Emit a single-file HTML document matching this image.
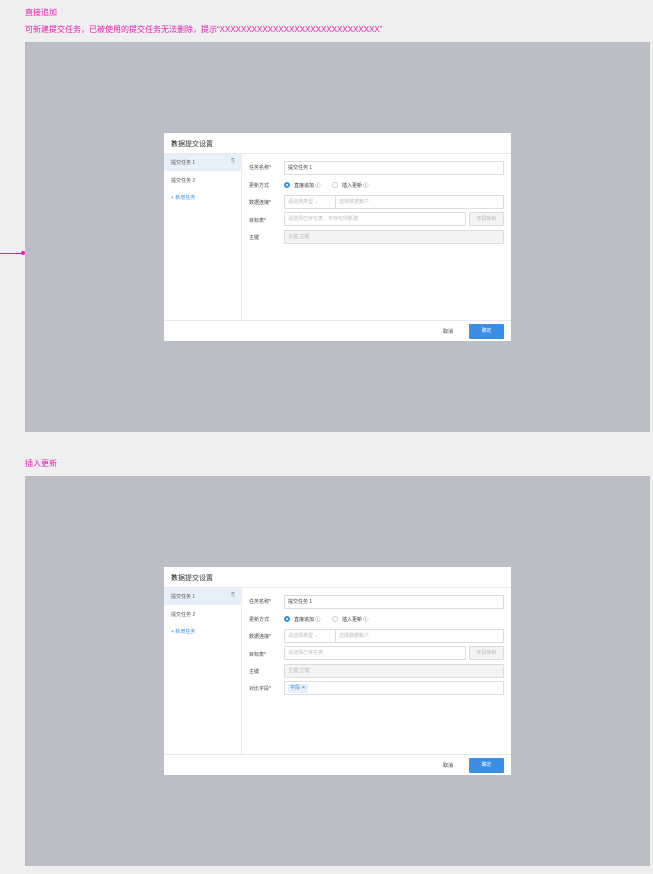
<!DOCTYPE html><html><head><meta charset="utf-8"><style>
*{margin:0;padding:0;box-sizing:border-box}
body{width:653px;height:874px;background:#efefef;position:relative;overflow:hidden;font-family:"Liberation Sans","Noto Sans CJK SC",sans-serif;color:#333}
.a{position:absolute}
.pink{color:#e020b0;font-size:8px}
.panel{position:absolute;left:25px;width:625px;height:390px;background:#bbbdc7}
.dlg{position:absolute;left:164px;width:347px;height:208px;background:#fff;font-size:5px}
.hd{position:absolute;left:0;top:0;width:347px;height:21px;border-bottom:1px solid #e8e8e8}
.hd span{position:absolute;left:7px;top:6px;font-size:7px;color:#333}
.x{position:absolute;right:7px;top:4px;font-size:9px;color:#888}
.side{position:absolute;left:0;top:21px;width:78px;height:166px;border-right:1px solid #e8e8e8}
.sel{position:absolute;left:0;top:0;width:78px;height:17px;background:#e6f0fb}
.ft{position:absolute;left:0;top:187px;width:347px;height:21px;border-top:1px solid #e8e8e8}
.ok{position:absolute;left:305px;top:3px;width:35px;height:15px;background:#3a8ee6;color:#fff;text-align:center;line-height:15px;border-radius:1px}
.lb{position:absolute;left:85px;color:#444}
.in{position:absolute;height:14px;border:1px solid #dcdcdc;background:#fff;color:#bbb;padding-left:3px;line-height:12px;border-radius:1px}
.dis{background:#f2f3f5}
.rd{position:absolute;width:6px;height:6px;border-radius:50%;border:1px solid #ccc}
</style></head><body>
<div class="a pink" style="left:25px;top:7px">直接追加</div>
<div class="a pink" style="left:25px;top:24px">可新建提交任务，已被使用的提交任务无法删除，提示“XXXXXXXXXXXXXXXXXXXXXXXXXXXXXX”</div>
<div class="a" style="left:0;top:253px;width:23px;height:1px;background:#e020b0"></div>
<div class="a" style="left:21px;top:251px;width:4px;height:4px;background:#e020b0;border-radius:50%"></div>
<div class="panel" style="top:42px"></div>
<div class="a pink" style="left:25px;top:458px">插入更新</div>
<div class="panel" style="top:476px"></div>

<!-- dialog 1 -->
<div class="dlg" style="top:133px">
<div class="hd"><span>数据提交设置</span><span class="x">✕</span></div>
<div class="side"><div class="sel"></div>
<div class="a" style="left:7px;top:5px;color:#555">提交任务 1</div><div class="a" style="left:67px;top:4px;color:#888">⎘</div>
<div class="a" style="left:7px;top:23px;color:#555">提交任务 2</div>
<div class="a" style="left:7px;top:40px;color:#3a8ee6">+ 新增任务</div></div>
<div class="lb" style="top:31px">任务名称*</div><div class="in" style="left:120px;top:28px;width:220px;color:#444">提交任务 1</div>
<div class="lb" style="top:49px">更新方式</div>
<div class="rd" style="left:120px;top:49px;border:2px solid #3a8ee6"></div><div class="a" style="left:130px;top:49px">直接追加 ⓘ</div>
<div class="rd" style="left:168px;top:49px"></div><div class="a" style="left:178px;top:49px">插入更新 ⓘ</div>
<div class="lb" style="top:66px">数据连接*</div><div class="in" style="left:120px;top:62px;width:52px">请选择类型 ⌄</div><div class="in" style="left:171px;top:62px;width:169px">选择数据账户</div>
<div class="lb" style="top:84px">目标表*</div><div class="in" style="left:120px;top:79px;width:182px">请选择已存在表，不存在则新建</div><div class="in dis" style="left:305px;top:79px;width:35px;text-align:center;padding:0">字段映射</div>
<div class="lb" style="top:101px">主键</div><div class="in dis" style="left:120px;top:97px;width:220px">主键,主键</div>
<div class="side" style="left:0;top:21px;border:none;width:0"></div>
<div class="ft"><div class="a" style="left:279px;top:7px">取消</div><div class="ok">确定</div></div>
</div>

<!-- dialog 2 -->
<div class="dlg" style="top:567px">
<div class="hd"><span>数据提交设置</span><span class="x">✕</span></div>
<div class="side"><div class="sel"></div>
<div class="a" style="left:7px;top:5px;color:#555">提交任务 1</div><div class="a" style="left:67px;top:4px;color:#888">⎘</div>
<div class="a" style="left:7px;top:23px;color:#555">提交任务 2</div>
<div class="a" style="left:7px;top:40px;color:#3a8ee6">+ 新增任务</div></div>
<div class="lb" style="top:31px">任务名称*</div><div class="in" style="left:120px;top:28px;width:220px;color:#444">提交任务 1</div>
<div class="lb" style="top:49px">更新方式</div>
<div class="rd" style="left:120px;top:49px;border:2px solid #3a8ee6"></div><div class="a" style="left:130px;top:49px">直接追加 ⓘ</div>
<div class="rd" style="left:168px;top:49px"></div><div class="a" style="left:178px;top:49px">插入更新 ⓘ</div>
<div class="lb" style="top:66px">数据连接*</div><div class="in" style="left:120px;top:62px;width:52px">请选择类型 ⌄</div><div class="in" style="left:171px;top:62px;width:169px">选择数据账户</div>
<div class="lb" style="top:84px">目标表*</div><div class="in" style="left:120px;top:79px;width:182px">请选择已存在表</div><div class="in dis" style="left:305px;top:79px;width:35px;text-align:center;padding:0">字段映射</div>
<div class="lb" style="top:101px">主键</div><div class="in dis" style="left:120px;top:97px;width:220px">主键,主键</div>
<div class="lb" style="top:118px">对比字段*</div><div class="in" style="left:120px;top:114px;width:220px"><span style="display:inline-block;background:#e6f0fb;color:#3a8ee6;padding:0 2px;line-height:9px;margin-top:1px">字段 ✕</span></div>
<div class="ft"><div class="a" style="left:279px;top:7px">取消</div><div class="ok">确定</div></div>
</div>
</body></html>
